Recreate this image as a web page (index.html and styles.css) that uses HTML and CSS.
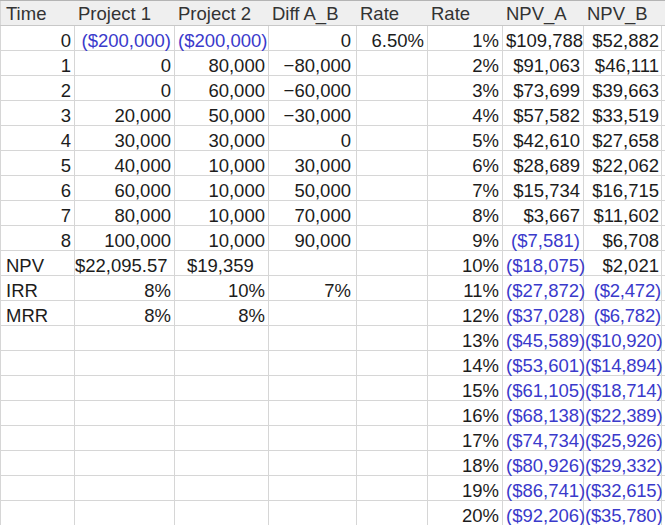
FILE: index.html
```html
<!DOCTYPE html>
<html>
<head>
<meta charset="utf-8">
<link rel="stylesheet" href="styles.css">
</head>
<body>
<div class="sheet">
  <div class="row head">
    <div class="c first">Time</div><div class="c">Project 1</div><div class="c">Project 2</div><div class="c">Diff A_B</div><div class="c">Rate</div><div class="c">Rate</div><div class="c">NPV_A</div><div class="c">NPV_B</div><div class="c"></div>
  </div>
  <div class="row"><div class="c first r">0</div><div class="c r neg">($200,000)</div><div class="c r neg">($200,000)</div><div class="c r diff">0</div><div class="c r">6.50%</div><div class="c r">1%</div><div class="c r">$109,788</div><div class="c r">$52,882</div><div class="c"></div></div>
  <div class="row"><div class="c first r">1</div><div class="c r">0</div><div class="c r">80,000</div><div class="c r diff">−80,000</div><div class="c"></div><div class="c r">2%</div><div class="c r">$91,063</div><div class="c r">$46,111</div><div class="c"></div></div>
  <div class="row"><div class="c first r">2</div><div class="c r">0</div><div class="c r">60,000</div><div class="c r diff">−60,000</div><div class="c"></div><div class="c r">3%</div><div class="c r">$73,699</div><div class="c r">$39,663</div><div class="c"></div></div>
  <div class="row"><div class="c first r">3</div><div class="c r">20,000</div><div class="c r">50,000</div><div class="c r diff">−30,000</div><div class="c"></div><div class="c r">4%</div><div class="c r">$57,582</div><div class="c r">$33,519</div><div class="c"></div></div>
  <div class="row"><div class="c first r">4</div><div class="c r">30,000</div><div class="c r">30,000</div><div class="c r diff">0</div><div class="c"></div><div class="c r">5%</div><div class="c r">$42,610</div><div class="c r">$27,658</div><div class="c"></div></div>
  <div class="row"><div class="c first r">5</div><div class="c r">40,000</div><div class="c r">10,000</div><div class="c r diff">30,000</div><div class="c"></div><div class="c r">6%</div><div class="c r">$28,689</div><div class="c r">$22,062</div><div class="c"></div></div>
  <div class="row"><div class="c first r">6</div><div class="c r">60,000</div><div class="c r">10,000</div><div class="c r diff">50,000</div><div class="c"></div><div class="c r">7%</div><div class="c r">$15,734</div><div class="c r">$16,715</div><div class="c"></div></div>
  <div class="row"><div class="c first r">7</div><div class="c r">80,000</div><div class="c r">10,000</div><div class="c r diff">70,000</div><div class="c"></div><div class="c r">8%</div><div class="c r">$3,667</div><div class="c r">$11,602</div><div class="c"></div></div>
  <div class="row"><div class="c first r">8</div><div class="c r">100,000</div><div class="c r">10,000</div><div class="c r diff">90,000</div><div class="c"></div><div class="c r">9%</div><div class="c r neg">($7,581)</div><div class="c r">$6,708</div><div class="c"></div></div>
  <div class="row"><div class="c first">NPV</div><div class="c tight">$22,095.57</div><div class="c indent">$19,359</div><div class="c"></div><div class="c"></div><div class="c r">10%</div><div class="c r neg">($18,075)</div><div class="c r">$2,021</div><div class="c"></div></div>
  <div class="row"><div class="c first">IRR</div><div class="c r">8%</div><div class="c r">10%</div><div class="c r diff">7%</div><div class="c"></div><div class="c r">11%</div><div class="c r neg">($27,872)</div><div class="c r neg">($2,472)</div><div class="c"></div></div>
  <div class="row"><div class="c first">MRR</div><div class="c r">8%</div><div class="c r">8%</div><div class="c"></div><div class="c"></div><div class="c r">12%</div><div class="c r neg">($37,028)</div><div class="c r neg">($6,782)</div><div class="c"></div></div>
  <div class="row"><div class="c first"></div><div class="c"></div><div class="c"></div><div class="c"></div><div class="c"></div><div class="c r">13%</div><div class="c r neg">($45,589)</div><div class="c r neg">($10,920)</div><div class="c"></div></div>
  <div class="row"><div class="c first"></div><div class="c"></div><div class="c"></div><div class="c"></div><div class="c"></div><div class="c r">14%</div><div class="c r neg">($53,601)</div><div class="c r neg">($14,894)</div><div class="c"></div></div>
  <div class="row"><div class="c first"></div><div class="c"></div><div class="c"></div><div class="c"></div><div class="c"></div><div class="c r">15%</div><div class="c r neg">($61,105)</div><div class="c r neg">($18,714)</div><div class="c"></div></div>
  <div class="row"><div class="c first"></div><div class="c"></div><div class="c"></div><div class="c"></div><div class="c"></div><div class="c r">16%</div><div class="c r neg">($68,138)</div><div class="c r neg">($22,389)</div><div class="c"></div></div>
  <div class="row"><div class="c first"></div><div class="c"></div><div class="c"></div><div class="c"></div><div class="c"></div><div class="c r">17%</div><div class="c r neg">($74,734)</div><div class="c r neg">($25,926)</div><div class="c"></div></div>
  <div class="row"><div class="c first"></div><div class="c"></div><div class="c"></div><div class="c"></div><div class="c"></div><div class="c r">18%</div><div class="c r neg">($80,926)</div><div class="c r neg">($29,332)</div><div class="c"></div></div>
  <div class="row"><div class="c first"></div><div class="c"></div><div class="c"></div><div class="c"></div><div class="c"></div><div class="c r">19%</div><div class="c r neg">($86,741)</div><div class="c r neg">($32,615)</div><div class="c"></div></div>
  <div class="row"><div class="c first"></div><div class="c"></div><div class="c"></div><div class="c"></div><div class="c"></div><div class="c r">20%</div><div class="c r neg">($92,206)</div><div class="c r neg">($35,780)</div><div class="c"></div></div>
</div>
</body>
</html>
```

FILE: styles.css
```css
html, body {
  margin: 0;
  padding: 0;
  background: #ffffff;
}

.sheet {
  width: 665px;
  height: 525px;
  overflow: hidden;
  font-family: "Liberation Sans", Arial, sans-serif;
  font-size: 18.5px;
  color: #1c1c1c;
}

.row {
  display: grid;
  grid-template-columns: 75px 100px 94px 88px 71px 75px 81px 78px 1fr;
}

.c {
  box-sizing: border-box;
  height: 25px;
  padding: 5px 3px 0 3px;
  line-height: 19px;
  white-space: nowrap;
  overflow: visible;
  border-right: 1px solid #d6d6d6;
  border-bottom: 1px solid #d6d6d6;
}

.c.first {
  border-left: 1px solid #d6d6d6;
  padding-left: 5px;
}

.r {
  text-align: right;
}

.row .c:nth-child(8) {
  padding-left: 1px;
  padding-right: 2px;
}

.row .neg:nth-child(8) {
  padding-right: 0;
  letter-spacing: -0.2px;
}

.diff {
  padding-right: 5px;
}

.neg {
  color: #3a3acb;
}

.tight {
  padding-left: 0;
}

.indent {
  padding-left: 12px;
}

.head {
  background: #efefef;
  border-top: 1px solid #b4b4b4;
  border-bottom: 1px solid #c8c8c8;
  color: #333333;
}

.head .c {
  height: 24px;
  padding-top: 3px;
  line-height: 20px;
  border: none;
}

.head .c.first {
  border-left: 1px solid #d6d6d6;
  padding-left: 5px;
}

.head .c:nth-child(8) {
  padding-left: 3px;
}
```
